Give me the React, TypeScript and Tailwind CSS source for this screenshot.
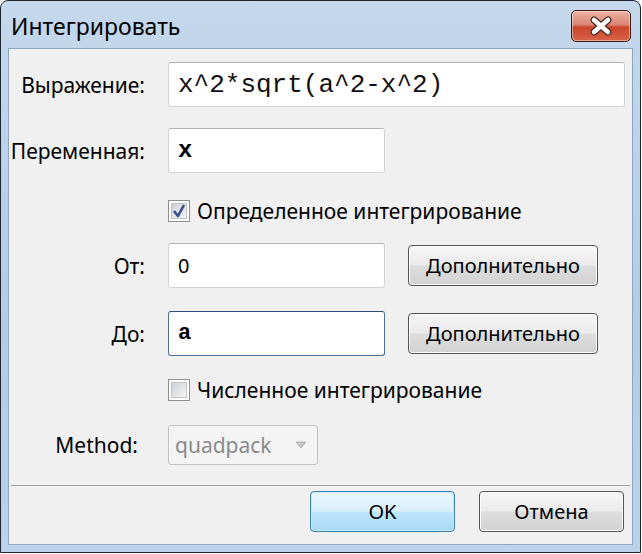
import React from "react";

const ui = "font-['Noto_Sans','Open_Sans',sans-serif]";
const mono = "font-['Liberation_Mono','Courier_New',monospace]";

function CloseButton() {
  return (
    <div className="flex h-[32px] w-[60px] items-center justify-center rounded-[5px] border border-[#3b1a14] bg-[linear-gradient(to_bottom,#eab3a6_0%,#dc8574_45%,#c9452b_55%,#d8644a_100%)] shadow-[inset_0_0_0_1px_rgba(255,255,255,0.45)]">
      <svg width="26" height="20" viewBox="0 0 26 20">
        <path d="M6 4 L20 16 M20 4 L6 16" stroke="#4a2a24" strokeWidth="7" strokeLinecap="round" />
        <path d="M6 4 L20 16 M20 4 L6 16" stroke="#ffffff" strokeWidth="4.5" strokeLinecap="round" />
      </svg>
    </div>
  );
}

function Field({
  children,
  width,
  focused,
}: {
  children?: React.ReactNode;
  width: string;
  focused?: boolean;
}) {
  return (
    <div
      className={`flex h-[45px] items-center rounded-[3px] border bg-white px-[9px] ${width} ${
        focused
          ? "border-[#4f6f93] border-t-[#2f4f73]"
          : "border-[#d0d3d8] border-t-[#aeb2b8]"
      }`}
    >
      {children}
    </div>
  );
}

function Button({ label, primary, className = "" }: { label: React.ReactNode; primary?: boolean; className?: string }) {
  return (
    <div
      className={`flex items-center justify-center rounded-[4px] border text-[20px] text-black ${ui} ${
        primary
          ? "border-[#3c7fb1] bg-[linear-gradient(to_bottom,#eaf6fd_0%,#d9f0fc_48%,#bee6fd_52%,#a7d9f5_100%)] shadow-[inset_0_0_0_1px_#c8e8fb]"
          : "border-[#555] bg-[linear-gradient(to_bottom,#f6f6f6_0%,#ebebeb_48%,#dddddd_52%,#d2d2d2_100%)] shadow-[inset_0_0_0_1px_#fcfcfc]"
      } ${className}`}
    >
      {label}
    </div>
  );
}

function Check({ checked }: { checked?: boolean }) {
  return (
    <div className="flex h-[22px] w-[22px] items-center justify-center border border-[#8e8f8f] bg-white">
      <div className="flex h-[16px] w-[16px] items-center justify-center border border-[#c3c3c3] bg-[linear-gradient(135deg,#cbcfd5,#f6f6f6)]">
        {checked && (
          <svg width="14" height="14" viewBox="0 0 14 14">
            <path d="M2 7 L6 12 L12 1" fill="none" stroke="#3b4f8c" strokeWidth="2.6" strokeLinejoin="round" />
          </svg>
        )}
      </div>
    </div>
  );
}

const more = (
  <span>
    <span className="underline underline-offset-[3px]">Д</span>ополнительно
  </span>
);

export default function App() {
  return (
    <div className="h-[554px] w-[642px] bg-white">
      <div className="flex h-[553px] w-[641px] flex-col rounded-t-[8px] border border-[#1c2733] bg-[linear-gradient(to_bottom,#c5d8ec,#b3cbe5_60%,#bcd2ea)] px-[7px] pb-[7px]">
        <div className="flex h-[47px] shrink-0 items-center justify-between pl-[3px] pr-[2px] pt-[3px]">
          <span className={`text-[23px] text-black ${ui}`}>Интегрировать</span>
          <CloseButton />
        </div>
        <div className={`flex flex-1 flex-col border border-[#8fa6bf] bg-[#f0f0f0] text-[21px] leading-[28px] text-black ${ui}`}>
          <div className="mt-[13px] flex items-center">
            <div className="w-[136px] text-right">Выражение:</div>
            <div className="ml-[23px]">
              <Field width="w-[457px]">
                <span className={`text-[26px] text-[#111] ${mono}`}>x^2*sqrt(a^2-x^2)</span>
              </Field>
            </div>
          </div>
          <div className="mt-[21px] flex items-center">
            <div className="w-[136px] text-right">Переменная:</div>
            <div className="ml-[23px]">
              <Field width="w-[217px]">
                <span className={`text-[24px] font-bold ${mono}`}>x</span>
              </Field>
            </div>
          </div>
          <div className="ml-[159px] mt-[24px] flex items-center gap-[7px]">
            <Check checked />
            <span>Определенное интегрирование</span>
          </div>
          <div className="mt-[18px] flex items-center">
            <div className="w-[136px] text-right">От:</div>
            <div className="ml-[23px]">
              <Field width="w-[217px]">
                <span className="text-[20px]">0</span>
              </Field>
            </div>
            <Button label={more} className="ml-[23px] h-[41px] w-[190px]" />
          </div>
          <div className="mt-[23px] flex items-center">
            <div className="w-[136px] text-right">До:</div>
            <div className="ml-[23px]">
              <Field width="w-[217px]" focused>
                <span className={`text-[22px] font-bold ${mono}`}>a</span>
              </Field>
            </div>
            <Button label={more} className="ml-[23px] h-[41px] w-[190px]" />
          </div>
          <div className="ml-[159px] mt-[20px] flex items-center gap-[7px]">
            <Check />
            <span>Численное интегрирование</span>
          </div>
          <div className="mt-[21px] flex items-center">
            <div className="w-[129px] text-right">Method:</div>
            <div className="ml-[30px] flex h-[40px] w-[150px] items-center justify-between rounded-[3px] border border-[#c2c2c2] bg-[#f4f4f4] pl-[6px] pr-[10px] text-[#8a8a8a]">
              <span>quadpack</span>
              <svg width="12" height="8" viewBox="0 0 12 8">
                <path d="M1 1 L11 1 L6 7 Z" fill="#c6c6c6" stroke="#a8a8a8" strokeWidth="0.8" />
              </svg>
            </div>
          </div>
          <div className="mx-[2px] mt-[20px] h-[1px] bg-[#a0a0a0]" />
          <div className="mt-[5px] flex justify-end gap-[24px] pr-[8px]">
            <Button label="OK" primary className="h-[41px] w-[145px]" />
            <Button label="Отмена" className="h-[41px] w-[145px]" />
          </div>
        </div>
      </div>
    </div>
  );
}
